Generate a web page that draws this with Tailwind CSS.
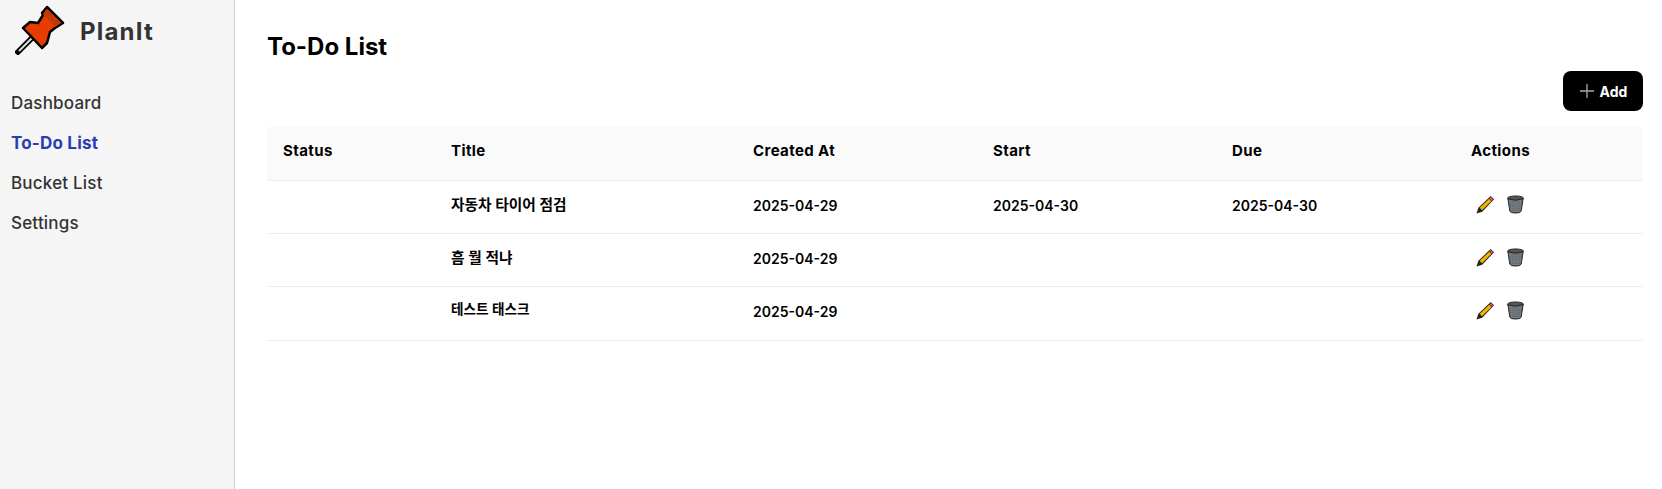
<!doctype html>
<html lang="ko">
<head>
  <meta charset="UTF-8">
  <script src="https://cdn.jsdelivr.net/npm/@tailwindcss/browser@4"></script>
  <title>PlanIt</title>
</head>
<body class="bg-white font-['Inter','Noto_Sans_CJK_KR',sans-serif] text-black">

<!-- shared action icons -->
<svg class="absolute w-0 h-0">
  <defs>
    <pattern id="mesh" width="2" height="2" patternUnits="userSpaceOnUse">
      <rect width="2" height="2" fill="#7a8186"/>
      <rect width="1" height="1" fill="#4a5054"/>
    </pattern>
  </defs>
  <symbol id="pencil" viewBox="0 0 20 20">
    <path d="M0.5 19.5 L2.5 13.5 L15.5 1 L19 4.5 L6.5 17.5 Z" fill="#222"/>
    <path d="M3.8 13.5 L14 4 L16.2 6.2 L6.3 16 Z" fill="#f5b400"/>
    <path d="M15.6 2 L18 4.4 L16.6 5.8 L14.2 3.4 Z" fill="#e8506a"/>
  </symbol>
  <symbol id="trash" viewBox="0 0 20 20">
    <ellipse cx="10" cy="3.5" rx="8.5" ry="2.5" fill="#555" stroke="#222"/>
    <path d="M2 4 L4 17 Q4.5 19 10 19 Q15.5 19 16 17 L18 4 Q10 7 2 4 Z" fill="url(#mesh)" stroke="#222"/>
  </symbol>
</svg>

<div class="flex h-[489px] overflow-hidden">
  <aside class="w-[235px] shrink-0 bg-[#f5f5f5] border-r border-[#cccccc]">
    <div class="flex items-center h-[60px] pl-[15px] gap-[15px]">
      <svg class="w-[50px] h-[50px] shrink-0" viewBox="0 0 50 50">
        <path d="M18 32 L3 47" stroke="#000" stroke-width="5.5" stroke-linecap="square"/>
        <path d="M18 32 L4 46" stroke="#ddd" stroke-width="2"/>
        <path d="M32 2 L48 18 L40 23 L35 27 L32 38 L27 43 L8 23 L15 17 L23 18 L28 10 L27 8 Z" fill="#e63c00" stroke="#000" stroke-width="2.5" stroke-linejoin="round"/>
        <path d="M32 4 L46 18 L40 22 L34 15 L28 9 Z" fill="#c43a05"/>
      </svg>
      <span class="text-[24px] font-bold text-[#333333] tracking-[1.2px] pt-[3px]">PlanIt</span>
    </div>
    <nav class="flex flex-col mt-[31px] pl-[11px] text-[17px] font-medium text-[#333333] gap-[16px] leading-[24px] tracking-[0.2px]">
      <a>Dashboard</a>
      <a class="font-bold text-[#2a3eb1]">To-Do List</a>
      <a>Bucket List</a>
      <a>Settings</a>
    </nav>
  </aside>

  <main class="flex-1 pl-[32px] pr-[19px]">
    <h1 class="mt-[31px] text-[24px] leading-[32px] font-bold">To-Do List</h1>
    <div class="flex justify-end mt-[8px]">
      <button class="flex items-center justify-center gap-[5px] w-[80px] h-[40px] bg-black text-white rounded-[8px] text-[14px] font-bold">
        <svg class="w-[16px] h-[16px]" viewBox="0 0 16 16"><path d="M8 1v14M1 8h14" stroke="#aaaaaa" stroke-width="1.3"/></svg>
        Add
      </button>
    </div>
    <table class="mt-[16px] w-full table-fixed border-collapse text-[14px]">
      <colgroup>
        <col class="w-[168px]"><col class="w-[302px]"><col class="w-[240px]"><col class="w-[239px]"><col class="w-[239px]"><col>
      </colgroup>
      <thead>
        <tr class="h-[53px] bg-[#fafafa] border-b border-[#eeeeee] text-left font-bold text-[15px] tracking-[0.4px]">
          <th class="pl-[16px] pb-[4px]">Status</th><th class="pl-[16px] pb-[4px]">Title</th><th class="pl-[16px] pb-[4px]">Created At</th><th class="pl-[16px] pb-[4px]">Start</th><th class="pl-[16px] pb-[4px]">Due</th><th class="pl-[16px] pb-[4px]">Actions</th>
        </tr>
      </thead>
      <tbody class="font-semibold">
        <tr class="h-[53px] border-b border-[#eeeeee]">
          <td></td><td class="pl-[16px] pb-[3px] text-[14.7px]">자동차 타이어 점검</td><td class="pl-[16px] pb-[3px]">2025-04-29</td><td class="pl-[16px] pb-[3px]">2025-04-30</td><td class="pl-[16px] pb-[3px]">2025-04-30</td>
          <td class="pl-[16px] pb-[5px]">
            <div class="flex items-center gap-[11px] pl-[5px]">
              <svg class="w-[19px] h-[19px]"><use href="#pencil"/></svg>
              <svg class="w-[19px] h-[19px]"><use href="#trash"/></svg>
            </div>
          </td>
        </tr>
        <tr class="h-[53px] border-b border-[#eeeeee]">
          <td></td><td class="pl-[16px] pb-[3px] text-[14.7px]">흠 뭘 적냐</td><td class="pl-[16px] pb-[3px]">2025-04-29</td><td></td><td></td>
          <td class="pl-[16px] pb-[5px]">
            <div class="flex items-center gap-[11px] pl-[5px]">
              <svg class="w-[19px] h-[19px]"><use href="#pencil"/></svg>
              <svg class="w-[19px] h-[19px]"><use href="#trash"/></svg>
            </div>
          </td>
        </tr>
        <tr class="h-[54px] border-b border-[#eeeeee]">
          <td></td><td class="pl-[16px] pb-[8px] text-[13.6px]">테스트 태스크</td><td class="pl-[16px] pb-[4px]">2025-04-29</td><td></td><td></td>
          <td class="pl-[16px] pb-[6px]">
            <div class="flex items-center gap-[11px] pl-[5px]">
              <svg class="w-[19px] h-[19px]"><use href="#pencil"/></svg>
              <svg class="w-[19px] h-[19px]"><use href="#trash"/></svg>
            </div>
          </td>
        </tr>
      </tbody>
    </table>
  </main>
</div>

</body>
</html>
